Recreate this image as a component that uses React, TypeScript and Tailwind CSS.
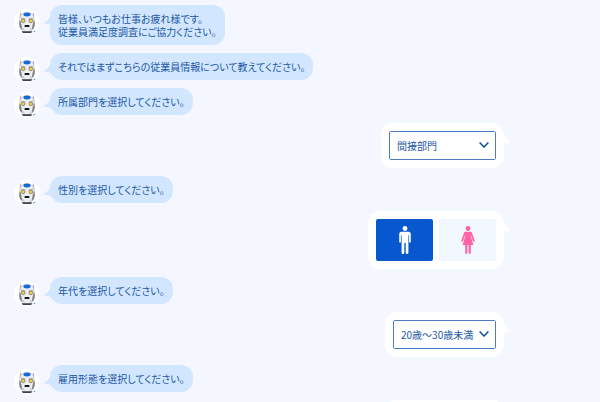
import { useState } from "react";
import type { ReactNode } from "react";

type Gender = "male" | "female";

const departments = ["間接部門", "営業部門", "開発部門"];
const ages = ["20歳未満", "20歳～30歳未満", "30歳～40歳未満", "40歳以上"];
const employments = ["正社員", "契約社員", "パート・アルバイト"];

function RobotIcon() {
  return (
    <svg viewBox="0 0 26 26" className="h-full w-full" aria-hidden="true">
      {/* ears */}
      <path d="M5.600 10 6 2.500 8.200 6.500Z" fill="#b4bac6" />
      <path d="M20.400 10 20 2.500 17.800 6.500Z" fill="#b4bac6" />
      {/* head */}
      <path
        d="M6.300 8.500C7 5.200 9.200 3.600 13 3.600s6 1.600 6.700 4.900l.2 8.500-3.200 5.500H9.300L6.100 17Z"
        fill="#eeeff3"
        stroke="#b4b8c0"
        strokeWidth=".5"
      />
      <ellipse cx="13" cy="5.500" rx="3.600" ry="1.900" fill="#1668d4" />
      {/* side guards */}
      <path d="M5.800 10.500c-.9 2.500-.8 6 .3 8.500l2.200 2.200-1-6Z" fill="#7d8088" />
      <path d="M20.200 10.500c.9 2.500.8 6-.3 8.500l-2.200 2.200 1-6Z" fill="#7d8088" />
      <path d="M7 9.700l4.300.3M19 9.700l-4.300.3" stroke="#75777e" strokeWidth=".7" />
      {/* eyes */}
      <circle cx="9.200" cy="11.900" r="1.800" fill="#f6d23c" stroke="#7c7866" strokeWidth=".8" />
      <circle cx="16.800" cy="11.900" r="1.800" fill="#f6d23c" stroke="#7c7866" strokeWidth=".8" />
      {/* mouth */}
      <rect x="10.600" y="15.900" width="4.800" height="2.200" rx=".4" fill="#17171b" />
      <path d="M8.800 19l1.500 2.500M17.200 19l-1.500 2.500" stroke="#a3a6ad" strokeWidth=".7" />
      {/* collar */}
      <path d="M7.500 22.200h11l-1.500 1.900H9Z" fill="#3c4250" />
      <path d="M19.300 23.200l2-1.400" stroke="#2f7fe0" strokeWidth=".9" />
    </svg>
  );
}

function BotMessage({ children }: { children: ReactNode }) {
  return (
    <div className="flex items-start gap-2.5">
      <div className="mt-1 -mb-1 h-[26px] w-[26px] shrink-0 overflow-hidden rounded-full bg-white">
        <RobotIcon />
      </div>
      <div className="relative rounded-xl bg-[#d2e7ff] px-2 py-[7px]">
        <svg viewBox="0 0 9 12" className="absolute top-2.5 -left-[7px] h-3 w-[9px]" aria-hidden="true">
          <path d="M9 0C6.500 2 4.500 6.500 0 8.300c3.500.3 6.500.5 9 2.700Z" fill="#d2e7ff" />
        </svg>
        <p className="relative">{children}</p>
      </div>
    </div>
  );
}

function UserMessage({ children }: { children: ReactNode }) {
  return (
    <div className="flex justify-end">
      <div className="relative rounded-xl bg-white p-2">
        <svg viewBox="0 0 10 12" className="absolute top-[11px] -right-2 h-3 w-2.5" aria-hidden="true">
          <path d="M1 0C3.500 2 5.500 7 10 8.700 6.500 8.600 3.500 8.800 1 11.500Z" fill="#fff" />
        </svg>
        {children}
      </div>
    </div>
  );
}

type SelectProps = {
  label: string;
  options: string[];
  initial: string;
  className: string;
};

function Select({ label, options, initial, className }: SelectProps) {
  const [value, setValue] = useState(initial);

  return (
    <div className="relative rounded-xs border border-[#4a7dc4]">
      <select
        aria-label={label}
        value={value}
        onChange={(e) => setValue(e.target.value)}
        className={`block h-[27px] appearance-none bg-white text-[#2357a6] focus:outline-none ${className}`}
      >
        {options.map((option) => (
          <option key={option}>{option}</option>
        ))}
      </select>
      <svg
        viewBox="0 0 10 6"
        className="pointer-events-none absolute top-2.5 right-1.5 h-1.5 w-2.5"
        aria-hidden="true"
      >
        <path d="M.6.5 5 5 9.400.5" fill="none" stroke="#0b4da2" strokeWidth="1.500" />
      </svg>
    </div>
  );
}

function GenderPicker() {
  const [gender, setGender] = useState<Gender>("male");
  const base = "flex h-[42px] w-[57px] items-center justify-center rounded-xs";

  return (
    <div className="flex gap-1.5">
      <button
        type="button"
        aria-label="男性"
        aria-pressed={gender === "male"}
        onClick={() => setGender("male")}
        className={`${base} ${gender === "male" ? "bg-[#0758cf] text-white" : "bg-[#f0f7ff] text-[#0758cf]"}`}
      >
        <svg viewBox="0 0 14 28" className="h-7 w-3.5" fill="currentColor" aria-hidden="true">
          <circle cx="7" cy="2.500" r="2.400" />
          <path d="M3.200 5.800h7.600a2.300 2.300 0 0 1 2 2.300v7.600a.85.85 0 0 1-1.700 0V9.200h-.7v17.500a1.300 1.300 0 0 1-2.700 0V17H6.300v9.700a1.300 1.300 0 0 1-2.700 0V9.200h-.7v6.500a.85.85 0 0 1-1.700 0V8.100a2.300 2.300 0 0 1 2-2.300Z" />
        </svg>
      </button>
      <button
        type="button"
        aria-label="女性"
        aria-pressed={gender === "female"}
        onClick={() => setGender("female")}
        className={`${base} ${gender === "female" ? "bg-[#ff62a6] text-white" : "bg-[#f0f7ff] text-[#ff62a6]"}`}
      >
        <svg viewBox="0 0 14 28" className="h-7 w-3.5" fill="currentColor" aria-hidden="true">
          <circle cx="7" cy="2.500" r="2.400" />
          <path d="M4.800 5.800h4.400c1 0 1.600.5 1.900 1.400l2.600 7.400c.4 1.200-1.200 1.700-1.600.6L10 9.600l-.3.100 2.700 9.300H9.800v7.800a1.100 1.100 0 0 1-2.200 0V19H6.400v7.800a1.100 1.100 0 0 1-2.200 0V19H1.600l2.700-9.300-.3-.1-2.100 5.600c-.4 1.100-2 .6-1.600-.6l2.600-7.400c.3-.9.900-1.400 1.900-1.400Z" />
        </svg>
      </button>
    </div>
  );
}

export default function App() {
  return (
    <main className="flex h-screen flex-col gap-2 overflow-hidden bg-[#f4f7ff] pt-[5px] pr-24 pl-3.5 font-['Noto_Sans_CJK_JP',sans-serif] text-[10px] leading-[13px] text-[#2357a6] [font-feature-settings:'palt'] *:shrink-0">
      <BotMessage>
        皆様、いつもお仕事お疲れ様です。
        <br />
        従業員満足度調査にご協力ください。
      </BotMessage>
      <BotMessage>それではまずこちらの従業員情報について教えてください。</BotMessage>

      <BotMessage>所属部門を選択してください。</BotMessage>
      <UserMessage>
        <Select label="所属部門" options={departments} initial="間接部門" className="w-[105px] pl-[7px]" />
      </UserMessage>

      <BotMessage>性別を選択してください。</BotMessage>
      <UserMessage>
        <GenderPicker />
      </UserMessage>

      <BotMessage>年代を選択してください。</BotMessage>
      <UserMessage>
        <Select label="年代" options={ages} initial="20歳～30歳未満" className="w-[101px] pl-[7px]" />
      </UserMessage>

      <BotMessage>雇用形態を選択してください。</BotMessage>
      <UserMessage>
        <Select label="雇用形態" options={employments} initial="正社員" className="w-[101px] pl-[7px]" />
      </UserMessage>
    </main>
  );
}
